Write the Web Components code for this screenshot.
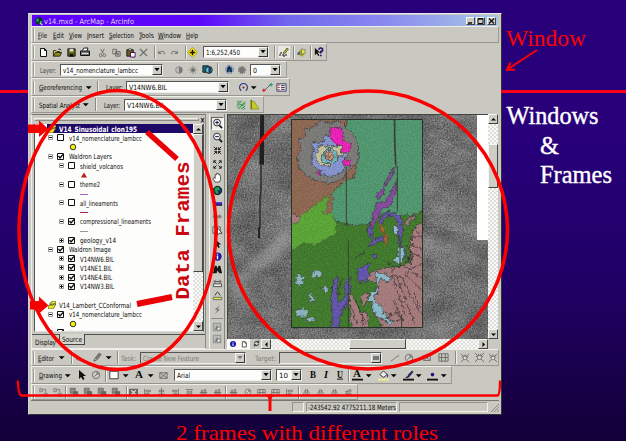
<!DOCTYPE html>
<html lang="en"><head><meta charset="utf-8"><title>Windows &amp; Frames</title>
<style>html,body{margin:0;width:626px;height:441px;overflow:hidden;background:#27007a}</style></head>
<body><slide-page></slide-page>
<script>
const define=(name,render)=>customElements.define(name,class extends HTMLElement{
  constructor(){super();this.attachShadow({mode:'open'});}
  connectedCallback(){this.shadowRoot.innerHTML=render(this);}
});
const esc=s=>s.replace(/&/g,'&amp;');
const T=(s,w,o='')=>`<fit-text w="${w}" text="${esc(s)}" ${o}></fit-text>`;

/* Text set to an exact measure */
define('fit-text',e=>{
  const w=+e.getAttribute('w'),s=+(e.getAttribute('size')||7.2),h=+(e.getAttribute('h')||10),u=e.getAttribute('u');
  const t=esc(e.getAttribute('text'));
  const label=u===null?t:t.slice(0,+u)+'<tspan text-decoration="underline">'+t[+u]+'</tspan>'+t.slice(+u+1);
  return `<style>:host{display:block;flex:none;width:${w}px;height:${h}px}svg{display:block;overflow:visible}text{font-family:${e.getAttribute('font')||'"DejaVu Sans Condensed","DejaVu Sans","Liberation Sans",sans-serif'};font-size:${s}px;font-weight:${e.getAttribute('weight')||400};font-style:${e.hasAttribute('it')?'italic':'normal'};fill:${e.getAttribute('color')||'#080808'}}</style>
  <svg width="${w}" height="${h}"><text x="0" y="${e.getAttribute('base')||h/2+2.6}" textLength="${w}" lengthAdjust="spacingAndGlyphs">${label}</text></svg>`;});

/* 12x12 glyphs */
const K='stroke="#111" fill="none"', G='stroke="#686863" fill="none"';
const icons={
 globe:'<circle cx="6" cy="6" r="4.6" fill="#0b3a2a"/><path d="M3 3l3 1-1 3-2 0zM7 6l3 0-2 4z" fill="#20b060"/><path d="M7 8l3 3" stroke="#ddd" stroke-width="1.5"/>',
 page:`<path d="M3.5 2.5h4l2 2v6h-6z M7.5 2.5v2h2" stroke="#111" fill="#fff"/>`,
 open:'<path d="M1.5 10V4h3l1 1h3v2" stroke="#221" fill="#e8e060"/><path d="M1.5 10l2-4h7l-2 4z" fill="#8a8a20" stroke="#221"/><path d="M7 2.5q2-1 3 1" stroke="#111" fill="none"/>',
 save:'<path d="M2 2h8v8H2z" fill="#66661c" stroke="#111"/><path d="M4 2h4v3H4z" fill="#ddd"/><path d="M4 7.500h4v3H4z" fill="#111"/>',
 print:'<path d="M3 5l2-3h4l-1 3" fill="#fff" stroke="#222"/><path d="M1.500 5h9v4.500h-9z" fill="#777" stroke="#111"/><path d="M3 7.500h6" stroke="#ddd"/>',
 cut:`<path d="M4 2l3 5M8 2L5 7" ${G}/><circle cx="4" cy="9" r="1.500" ${G}/><circle cx="8" cy="9" r="1.500" ${G}/>`,
 copy:`<path d="M2 2.500h4v5H2zM5 5h5v5H5z" ${G}/><path d="M6 7h3M6 8.500h3" ${G}/>`,
 paste:'<path d="M2 3h7v7H2z" fill="#665f18" stroke="#111"/><path d="M4 2h3v2H4z" fill="#ddd" stroke="#111" stroke-width=".6"/><path d="M6 6h5v5H6z" fill="#fff" stroke="#406"/>',
 del:`<path d="M2 2l8 8M10 2L2 10" ${G} stroke-width="1.300"/>`,
 undo:`<path d="M3 4v3h3M3 7q3-4 6-1v2" ${G}/>`, redo:`<path d="M9 4v3H6M9 7Q6 3 3 6v2" ${G}/>`,
 add:'<path d="M6 .5L11.500 6 6 11.500 .5 6z" fill="#ffe600" stroke="#887a10" stroke-width=".6"/><path d="M6 3v6M3 6h6" stroke="#111" stroke-width="1.600"/>',
 edit:'<path d="M0 0h12v12H0z" fill="#e9e8e0"/><path d="M1 9h9M2 7h2M5 10h2" stroke="#111" stroke-dasharray="2 1"/><path d="M5 7l4-5 1.500 1-4 5z" fill="#bbbf20" stroke="#222" stroke-width=".6"/>',
 box:'<path d="M1 7l4-4 5 3-3 5z" fill="#a5a820"/><path d="M6 2l4 1v4L6 8z" fill="#dddf50" stroke="#555" stroke-width=".6"/><path d="M1 8l3-4v5z" fill="#46589c"/>',
 help:'<path d="M2 1v8l2-2 2 3 1-1-2-3h3z" fill="#111"/><path d="M6.500 3q0-2 2-2t2 2-2 2v2M8.500 8.500v1.500" stroke="#20106c" stroke-width="1.700" fill="none"/>',
 half:'<circle cx="6" cy="6" r="4" fill="#bbb" stroke="#858580"/><path d="M6 2a4 4 0 0 1 0 8z" fill="#777"/>',
 sun:`<circle cx="6" cy="6" r="2" fill="#777"/><path d="M6 1v10M1 6h10M2.500 2.500l7 7M9.500 2.500l-7 7" ${G} stroke-width=".8"/>`,
 trans:'<path d="M1 2h6v7H1z" fill="#176d87" stroke="#111"/><circle cx="7.500" cy="6.500" r="3.700" fill="#60c8d0" stroke="#111"/><path d="M7 3h3v7H7z" fill="#203f60"/>',
 swipe:'<circle cx="6" cy="6" r="4.500" fill="none" stroke="#426ab0" stroke-dasharray="1 1"/><circle cx="6" cy="6" r="3.300" fill="#1c7050"/><path d="M3.500 9l2-6 3 6" stroke="#24107a" fill="none" stroke-width="1.500"/>',
 dots:'<circle cx="6" cy="6" r="3.500" fill="#777" stroke="#777" stroke-width="3" stroke-dasharray="1.200 1"/>',
 rotate:'<path d="M3.500 9.500a4.300 4.300 0 1 1 5 0" fill="none" stroke="#30308a" stroke-width="1.200"/><circle cx="6" cy="6" r="1" fill="#611"/>',
 link:'<path d="M2 10L10 2" stroke="#40569a"/><path d="M0 9h4M2 7v4" stroke="#e01818" stroke-width="1.200"/><path d="M8 3h4M10 1v4" stroke="#169858"/>',
 table:'<path d="M1 2h10v8H1z" fill="#eee" stroke="#30306a"/><path d="M2 3.500h2M2 6h2M2 8.500h2" stroke="#c11"/><path d="M5.500 4h4M5.500 6h4M5.500 8h4" stroke="#333"/>',
 contour:'<path d="M1 1h10v10H1z" fill="#b4ccb0"/><path d="M1 3l3-2M1 6l6-5M1 9l4-4 2 1 4-4M3 11l4-5 1 1 3-3M6 11l5-4M9 11l2-1" stroke="#187534" fill="none"/>',
 hist:'<path d="M2 11V1l2 2 1-1 6 9z" fill="#c5cb20" stroke="#6d7618" stroke-width=".6"/><path d="M2.500 1v10" stroke="#5b650c"/>',
 zin:`<circle cx="5.500" cy="5" r="3.700" stroke="#222" fill="#eef"/><path d="M8 8l3 3" ${K} stroke-width="1.700"/><path d="M3.500 5h4M5.500 3v4" ${K}/>`,
 zout:`<circle cx="5.500" cy="5" r="3.700" stroke="#222" fill="#eef"/><path d="M8 8l3 3" ${K} stroke-width="1.700"/><path d="M3.500 5h4" ${K}/>`,
 fixin:`<path d="M2 2l3 3H2.500M5 5V2.500M10 2L7 5h2.500M7 5V2.500M2 10l3-3H2.500M5 7v2.500M10 10L7 7h2.500M7 7v2.500" ${K}/>`,
 fixout:`<path d="M5 5L2 2h2.500M2 2v2.500M7 5l3-3H7.500M10 2v2.500M5 7l-3 3h2.500M2 10V7.500M7 7l3 3H7.500M10 10V7.500" ${K}/>`,
 hand:'<path d="M3.500 11L1 7l1-1 1.500 1V3h1.300V1.500h1.400V2h1.300v1h1.400l.6 5-1.500 3z" fill="#fff" stroke="#222" stroke-width=".8"/>',
 earth:'<circle cx="6" cy="6" r="4.600" fill="#13366f" stroke="#111"/><path d="M3 3l4-1 2 3-3 1 1 3-2 1-2-4z" fill="#18a048"/>',
 back:'<path d="M1 6l3-3v1.500h7v3H4v1.500z" fill="#3722c0"/><path d="M4 8h7" stroke="#111"/>',
 fwd:'<path d="M11 6L8 3v1.500H1v3h7v1.500z" fill="#858580"/>',
 select:'<path d="M1 2h8v7H1z" fill="#ddd" stroke="#555"/><path d="M6 3v8l2-2h3z" fill="#fff" stroke="#111" stroke-width=".8"/>',
 arrow:'<path d="M3 1v9l2-2 2 3 1.500-1L7 7h3z" fill="#111"/>',
 arrowg:'<path d="M3 1v9l2-2 2 3 1.500-1L7 7h3z" fill="#85857f"/>',
 info:'<circle cx="6" cy="6" r="4.500" fill="#1b18a0"/><path d="M6 3v1M6 5v4" stroke="#fff" stroke-width="1.500"/>',
 find:'<path d="M1 10L3 2h2l1 3 1-3h2l2 8H8L6 7l-1 3z" fill="#151515"/>',
 measure:'<path d="M1.500 7.500h9v3h-9z" fill="#eee" stroke="#444"/><path d="M3 5h6M4 3L2 5l2 2M8 3l2 2-2 2" stroke="#444" fill="none"/>',
 hyper:'<path d="M1.500 8h9v2.500h-9z" fill="#eff050" stroke="#665"/><path d="M3 6l3-4 3 4" stroke="#333" fill="none"/>',
 bolt:'<path d="M9 1L3 6l3 .5L3 11l6-5-3-.5z" fill="#777"/>',
 bitmap:'<path d="M1.500 1.500h9v9h-9z" fill="#bbb" stroke="#858580"/><path d="M3 9l3-5 4 5z" fill="#777"/><circle cx="8" cy="8" r="2" fill="#eee" stroke="#777"/>',
 pencil:'<path d="M2 10l1-3 5-6 2 2-5 6z" fill="#777" stroke="#666"/><path d="M3 7l2 2" stroke="#ddd"/>',
 rot:`<circle cx="6" cy="6" r="4.500" ${G}/><path d="M4 8l4-4M6 3.500h2.500V6" ${G}/>`,
 white:'<path d="M1 1.500h10v9H1z" fill="#fff" stroke="#222"/>',
 tag:`<path d="M2 3h8v6H2zM2 3l8 6M10 3L2 9" ${G}/>`,
 nodes:'<path d="M1 1h4v4H1zM7 7h4v4H7z" fill="#b8b8b2" stroke="#777"/><path d="M5 9H2M9 6V2H6" stroke="#666" fill="none"/>',
 group:'<path d="M1.500 1.500h6v6h-6z" fill="#888" stroke="#666"/><path d="M5 5h6v6H5z" fill="#666"/>',
 grid2:'<path d="M0 1h12v10H0z" fill="#666"/><path d="M3 3l6 6M9 3L3 9" stroke="#ddd" stroke-width="1.500"/>',
 al:`<path d="M2 1v10M4 3h6v2H4zM4 7h4v2H4z" ${G}/>`, ac:`<path d="M6 0v12M3 3h6v2H3zM2 8h8v2H2z" ${G}/>`, ar:`<path d="M10 1v10M2 3h6v2H2zM4 7h4v2H4z" ${G}/>`,
 at:`<path d="M1 2h10M3 4h2v6H3zM7 4h2v4H7z" ${G}/>`, dist:`<path d="M1 6h10M3 3h2v6H3zM7 2h2v8H7z" ${G}/>`,
 tri:`<path d="M5 2L1 10h4zM7 2l4 8H7z" ${G}/>`, flip:`<path d="M2 5l7-3v3zM2 7l7 3V7z" ${G}/>`,
 sel:`<path d="M1 1l4 4M11 1L7 5M1 11l4-4M11 11L7 7M5 2v3H2M7 2v3h3" ${G}/><path d="M4 4h4v4H4z" fill="#ddd" stroke="#777"/>`,
 line:`<path d="M1 10l4-3 2-2 4-2" ${G}/>`, frame:`<path d="M1 2h10v8H1zM4 2v8M8 2v8M1 6h10" ${G}/>`,
 fontA:'<path d="M0 10.500h12" stroke="#111" stroke-width="2"/>',
 fill:'<path d="M2 5l4-4 4 4-4 3z" fill="#eee" stroke="#333"/><path d="M9 4q3 1 1 4" fill="none" stroke="#24108a"/><path d="M0 10.500h12" stroke="#f3f090" stroke-width="2"/>',
 pen:'<path d="M3 8q3 0 3-3l4-4 1 1-4 5q-2 2-4 1" fill="#25259a" stroke="#111" stroke-width=".7"/><path d="M0 10.500h12" stroke="#111" stroke-width="2"/>',
 dot:'<circle cx="6" cy="5" r="2" fill="#25108a"/><path d="M0 10.500h12" stroke="#111" stroke-width="2"/>',
 refresh:`<path d="M3 6q0-3 4-3l2 1M9 6q0 3-4 3L3 8M9 2v2.500H6.500M3 10V7.500h2.500" ${K}/>`,
 down:'<path d="M3 4.500h6.500L6.200 8z" fill="#000"/>'
};
define('ui-icon',e=>{const w=e.getAttribute('w')||11;return `<style>:host{display:block;flex:none;width:${w}px;height:${w}px}svg{display:block}</style><svg width="${w}" height="${w}" viewBox="0 0 12 12">${icons[e.getAttribute('name')]}</svg>`});

define('combo-box',e=>{const tw=e.getAttribute('tw'),dis=e.hasAttribute('dis');
 return `<style>:host{display:flex;height:12px;box-sizing:border-box;border:1px solid;border-color:#555 #eee #eee #555;background:${dis?'#c9c8c0':'#fdfdfb'};justify-content:space-between;align-items:center;padding-left:2px;flex:none}
 .b{width:8px;height:8px;background:#cfcec6;border:1px solid;border-color:#f4f4f0 #333 #333 #f4f4f0;display:grid;place-items:center}svg{display:block}</style>
 ${+tw?T(e.getAttribute('text'),tw,dis?'color="#7c7c76"':''):'<span></span>'}<div class="b"><svg width="6" height="4"><path d="${dis&&!+tw?'M0 0h6v4H0z':'M0.500 0h5L3 3.200z'}" fill="${dis?'#777':'#000'}"/></svg></div>`});

/* Toolbar band: items given as [x, width, markup], spaced out by margins */
const row=(left,items)=>{let c=left;return items.map(([x,w,h])=>{const m=x-c;c=x+w;return `<div style="margin-left:${m}px;width:${w}px;flex:none;display:flex;justify-content:center">${h}</div>`}).join('')};
const I=(n,cx,w=11)=>[cx-w/2,w,`<ui-icon name="${n}" w="${w}"></ui-icon>`];
const D=cx=>I('down',cx,11);
const S=x=>[x,2,'<i style="width:1px;height:13px;background:#8a8983;border-right:1px solid #f0f0ea"></i>'];
const L=(s,x,w,o='')=>[x,w,T(s,w,o)];
const C=(s,x,w,tw,dis='')=>[x,w,`<combo-box style="width:${w}px" text="${s}" tw="${tw}" ${dis}></combo-box>`];
const B=(s,cx,w,st)=>[cx-w/2,w,T(s,w,`font="'Liberation Serif',serif" size="9.500" weight="700" ${st||''}`)];
const bands={
 menu:{w:468,h:17,items:[L('File',37,9,'u="0"'),L('Edit',51.500,11,'u="0"'),L('View',67.500,13,'u="0"'),L('Insert',85.500,17,'u="0"'),L('Selection',107.500,25,'u="0"'),L('Tools',138,15,'u="0"'),L('Window',157,23,'u="0"'),L('Help',184.500,12,'u="0"')]},
 std:{w:296,h:18,items:[I('page',42,12),I('open',56),I('save',70),I('print',84,12),I('cut',101),I('copy',115),I('paste',129.500),I('del',142.500),S(153),I('undo',160),I('redo',173.500),S(184),I('add',191.500),C('1:6,252,450',202,66,34),S(273),I('edit',282.500,12),S(292),I('box',300),S(309),I('help',317)]},
 fx:{w:256,h:17,items:[L('Layer:',39,16,'color="#444"'),C('v14_nomenclature_lambcc',58.500,103,75),I('half',178,10),I('sun',192,10),I('trans',206),S(216),I('swipe',228),I('dots',240.500,10),C('0',248.500,31,4)]},
 geo:{w:259,h:18,items:[L('Georeferencing',37.500,43,'u="0"'),D(87),S(96),L('Layer:',104.500,17),C('V14NW6.BIL',125,103,38),I('rotate',242,11),D(252.500),I('link',266,11),I('table',280,11)]},
 spat:{w:233,h:17,items:[L('Spatial Analyst',37.500,41),D(84),S(94),L('Layer:',103,16),C('V14NW6.BIL',123,103,38),I('contour',239.500,10),I('hist',253)]},
 editor:{w:468,h:17,items:[L('Editor',37,16,'u="0"'),D(60),S(70),I('arrowg',77,8),I('pencil',96),D(107),S(116),L('Task:',120,15,'color="#7c7c76"'),C('Create New Feature',138.500,106,56,'dis'),L('Target:',253.500,21,'color="#7c7c76"'),C('',278,103,0,'dis'),I('line',394,10),I('rot',408,10),I('tag',426,10),I('frame',442,11),S(454),I('sel',464,10),I('sel',478,11),I('sel',492,10)]},
 draw:{w:421,h:18,items:[L('Drawing',37.500,23,'u="0"'),D(66),I('arrow',81,12),I('rot',95,10),S(104),I('white',113,10),D(124),B('A',137.500,8,'size="11"'),D(149),I('tag',162,11),C('Arial',173,98,13),C('10',275,26,9),B('B',312,6),B('I',325,4,'it'),B('U',338.500,6,'u="0"'),S(347),[350,12,'<div style="display:grid;place-items:center"><div style="grid-area:1/1">'+T('A',8,'font="\'Liberation Serif\',serif" size="10.500" weight="700" base="7"')+'</div><ui-icon style="grid-area:1/1" name="fontA" w="11"></ui-icon></div>'],D(367.500),I('fill',382),D(392.500),I('pen',407),D(417.500),I('dot',431),D(442.500)]},
 gfx:{w:327,h:16,items:[I('nodes',42,9),I('nodes',56,9),S(64),I('group',73,10),I('group',87,10),I('group',101,10),I('group',115,10),S(125),I('grid2',132,9),I('al',146,9),I('ac',160,9),I('ar',174,9),I('at',188,9),I('dist',202,9),I('dist',216,9),S(224),I('dist',232.500,9),I('rot',247,8),I('frame',260,9),I('frame',274,9),I('al',288,9),S(297),I('tri',305.500,9),I('tri',319,9),I('tri',333,9),I('flip',347,9)]}
};
define('tool-band',e=>{const b=bands[e.getAttribute('kind')];return `<style>:host{display:flex;flex:none;align-items:center;box-sizing:border-box;height:${b.h}px;width:${b.w}px;border:1px solid;border-color:#efeee8 #9b9a94 #96958f #efeee8;padding-left:1px}
 .grip{width:1px;height:13px;background:#9a9993;border-right:1px solid #f4f4ee;flex:none}</style><i class="grip"></i>${row(34,b.items)}`});

define('title-bar',()=>`<style>:host{display:flex;height:11px;flex:none;align-items:center;margin:0 1px;background:linear-gradient(90deg,#6000ff 0,#5d06fa 36%,#7067ee 55%,#8a8af0 76%,#a8c8e6);padding:0 2px;box-sizing:border-box}
 .s{flex:1}.b{width:7px;height:6px;border:1px solid;border-color:#f5f5f0 #444 #444 #f5f5f0;background:#cdccc4;margin-left:1px}.b:last-child{margin-left:2px}svg{display:block}</style>
 <ui-icon name="globe" w="10"></ui-icon><div>${T('v14.mxd - ArcMap - ArcInfo',90,'color="#dcd2ff" size="7.400"')}</div><div class="s"></div>
 <div class="b"><svg width="7" height="6"><path d="M1 5h4" stroke="#111" stroke-width="1.500"/></svg></div><div class="b"><svg width="7" height="6"><path d="M1 .5h5v5H1zM1 1.200h5" stroke="#111" fill="none"/></svg></div><div class="b"><svg width="7" height="6"><path d="M1 .5l5 5M6 .5l-5 5" stroke="#111" stroke-width="1.300"/></svg></div>`);

/* Table of contents */
define('tree-row',e=>{const a=n=>e.getAttribute(n),lv=+a('lv');
 const pad=lv===1?13:24;let c='';
 const exp=`<svg width="5" height="5"><path d="M.5.5h4v4h-4z" fill="#fff" stroke="#999"/><path d="M1 2.500h3${a('exp')==='+'?'M2.500 1v3':''}" stroke="#111"/></svg>`;
 if(a('sym')){const s={c:'<circle cx="4" cy="4" r="2.800" fill="#f0f000" stroke="#333"/>',t:'<path d="M4 1.500l3 5H1z" fill="#c01818"/>',p:'<path d="M0 4.500h8" stroke="#aa66cc"/>',r:'<path d="M0 4.500h8" stroke="#a52a3a"/>',g:'<path d="M0 4.500h8" stroke="#999"/>'}[a('sym')];
  c=`<svg style="margin-left:${lv===1?33.500:44.500}px" width="8" height="8">${s}</svg>`}
 else if(lv===0)c=a('text')?`<svg style="margin:0 3px 0 12.500px" width="8" height="8"><path d="M0 5l4-2h4L5 8H0zM2 2l3-2h3v2L5 4H2z" fill="#e8e820" stroke="#443" stroke-width=".7"/></svg>${T(a('text'),a('w'),e.hasAttribute('hot')?'color="#fff" weight="700" size="7.400"':'')}`:'';
 else c=`<div style="width:${pad}px"></div>${exp}<svg style="margin:0 5px 0 4px" width="7" height="7"><path d="M.5.5h6v6h-6z" fill="#fff" stroke="#111"/>${e.hasAttribute('on')?'<path d="M1.500 3l1.500 2 3-3.500" stroke="#111" fill="none" stroke-width="1.300"/>':''}</svg>${T(a('text'),a('w'))}`;
 return `<style>:host{display:flex;align-items:center;height:9.290px;flex:none;${e.hasAttribute('hot')?'background:linear-gradient(90deg,#fdfdfb 12px,#1d0a68 12px)':''}}div,svg{flex:none;display:block}</style>${c}`});
define('scroll-bar',e=>{const v=e.hasAttribute('v'),a=n=>e.getAttribute(n);const r=v?['M2 5.500h5L4.500 3z','M2 3.500h5L4.500 6z']:['M5.500 2v5L3 4.500z','M3.500 2v5L6 4.500z'];
 return `<style>:host{display:flex;flex:none;flex-direction:${v?'column':'row'};background:repeating-conic-gradient(#fafaf8 0 25%,#dedfda 0 50%) 0 0/4px 4px}
 .b,.t{box-sizing:border-box;background:#cfcec6;border:1px solid;border-color:#f6f6f2 #444 #444 #f6f6f2;flex:none}.b{width:10px;height:10px}.g{flex:1}svg{display:block;margin:-.5px}</style>
 <div class="b"><svg width="9" height="9"><path d="${r[0]}"/></svg></div><div style="${v?'height':'width'}:${a('pre')}px"></div><div class="t" style="${v?'height':'width'}:${a('thumb')}px;${v?'width':'height'}:10px"></div><div class="g"></div><div class="b"><svg width="9" height="9"><path d="${r[1]}"/></svg></div>`});
const rows=[[0,'V14_Sinusoidal_clon195',78,'hot'],[1,'v14_nomenclature_lambcc',73],[1,'','','sym="c"'],[1,'Waldron Layers',43,'on'],[2,'shield_volcanos',43],[2,'','','sym="t"'],[2,'theme2',20],[2,'','','sym="p"'],[2,'all_lineaments',38],[2,'','','sym="r"'],[2,'compressional_lineaments',71,'on'],[2,'','','sym="g"'],[2,'geology_v14',36,'on exp="+"'],[1,'Waldron Image',42,'on'],[2,'V14NW6.BIL',34,'on exp="+"'],[2,'V14NE1.BIL',32,'on exp="+"'],[2,'V14NE4.BIL',32,'on exp="+"'],[2,'V14NW3.BIL',34,'on exp="+"'],[0,'',''],[0,'V14_Lambert_CConformal',72],[1,'v14_nomenclature_lambcc',73,'on'],[1,'','','sym="c"'],[1,'Waldron Layers',43,'on']];
define('toc-panel',()=>`<style>:host{display:flex;flex-direction:column;width:175px;box-sizing:border-box;border:1px solid;border-color:#77766f #8b8a84 #eee #eee;flex:none}
 .x{height:9px;display:flex;align-items:center;gap:1px}.x i{flex:1;height:1px;border:1px solid;border-color:#f3f3ed #8b8a84 #8b8a84 #f3f3ed;margin-left:2px}
 .box{display:flex;height:208px;margin:0 1px 0 2px;border-left:1px solid #555;border-right:1px solid #555;border-bottom:1px solid #ddd;background:#fdfdfb;box-sizing:border-box}
 .list{flex:1;overflow:hidden}.tabs{display:flex;align-items:flex-start;margin-top:2px;border-top:1px solid #555;height:14px}.tab{padding:2px 3px 0;height:10px}.on{border:1px solid #444;border-top:0;background:#d6d5cd;padding:0 2px;margin-top:-1px}</style>
 <div class="x"><i></i>${T('×',5,'size="9" weight="700"')}</div><div class="box"><div class="list">${rows.map(r=>`<tree-row lv="${r[0]}" text="${r[1]}" w="${r[2]}" ${r[3]||''}></tree-row>`).join('')}</div><scroll-bar v pre="0" thumb="138"></scroll-bar></div>
 <div class="tabs"><div class="tab">${T('Display',21)}</div><div class="tab on">${T('Source',20)}</div></div>`);
define('tool-column',()=>`<style>:host{display:flex;flex-direction:column;width:16px;align-items:center;gap:2.200px;padding-top:3px;box-sizing:border-box;border-left:1px solid #f4f4ee;border-right:1px solid #85847e;flex:none}.k{background:#efeee9;border:1px solid;border-color:#666 #fff #fff #666}hr{width:12px;border:0;border-top:1px solid #888;margin:1px}</style>
 <ui-icon class="k" name="zin"></ui-icon>${['zout','fixin','fixout','hand','earth','back','fwd','select','arrow','info','find','measure','hyper','bolt'].map(n=>`<ui-icon name="${n}" w="11"></ui-icon>`).join('')}<hr><ui-icon name="bitmap" w="10"></ui-icon><ui-icon name="bitmap" w="10"></ui-icon>`);

/* Map canvas: drawn in thirds of a pixel; filters roughen the unit outlines */
const FR=[[270,485,22,15],[220,505,18,20],[296,530,15,11],[255,560,13,18],[228,604,26,16],[248,625,18,9]];
const rnd=(i,s)=>{const v=Math.sin(i*12.9898+s*78.233)*43758.5453;return v-Math.floor(v)};
const shards=FR.map(([cx,cy,rx,ry],s)=>{let p=[];for(let i=0;i<16;i++){const a=i/16*6.283,r=.35+.75*rnd(i,s+1);p.push((cx+rx*r*Math.cos(a)).toFixed(0)+' '+(cy+ry*r*Math.sin(a)).toFixed(0))}return 'M'+p.join('L')+'z'}).join('');
define('map-view',()=>`<style>:host{display:flex;flex-direction:column;width:272px;flex:none}.top{display:flex;height:225px}.bot{display:flex;height:10px;width:261px}.v{width:23px;display:flex;align-items:center;justify-content:space-around;background:#fafaf6;margin-right:2px}svg{display:block}scroll-bar{flex:1}.top scroll-bar{flex:none;width:10px}.top svg{flex:none}filter{color-interpolation-filters:sRGB}</style>
 <div class="top"><svg width="261" height="225" viewBox="227 114 261 225">
 <defs><filter id="n" x="0" y="0" width="1" height="1"><feTurbulence type="fractalNoise" baseFrequency=".7" numOctaves="2" seed="4"/><feColorMatrix values="1 .3 0 0 -.2 1 .3 0 0 -.2 1 .3 0 0 -.2 0 0 0 0 1"/></filter>
 <filter id="m" x="0" y="0" width="1" height="1"><feTurbulence type="fractalNoise" baseFrequency=".03 .05" numOctaves="4" seed="23"/><feColorMatrix values="1.200 .4 0 0 -.35 1.200 .4 0 0 -.35 1.200 .4 0 0 -.35 0 0 0 0 1"/></filter>
 <filter id="d" filterUnits="userSpaceOnUse" x="150" y="0" width="636" height="690"><feTurbulence type="fractalNoise" baseFrequency=".09" numOctaves="2" seed="8" result="t"/><feDisplacementMap in="SourceGraphic" in2="t" scale="17" xChannelSelector="R" yChannelSelector="G"/></filter>
 <filter id="b" x="-.3" y="-.3" width="1.600" height="1.600"><feGaussianBlur stdDeviation="9"/></filter>
 <clipPath id="c"><path d="M193 23H587V646H193z"/></clipPath></defs>
 <path d="M227 114h261v225H227z" fill="#6c6c6c"/><rect x="227" y="114" width="261" height="225" filter="url(#m)" opacity=".3"/><rect x="227" y="114" width="261" height="225" filter="url(#n)" opacity=".38"/>
 <g transform="translate(227 112) scale(.33333)">
 <path d="M10 500l80-70 100-90v70l-110 80-60 70z" fill="#ccc" opacity=".28" filter="url(#b)"/><path d="M590 370q100 20 160 60v30q-80-50-160-50z" fill="#ccc" opacity=".2" filter="url(#b)"/>
 <g fill="none" stroke="#ddd" stroke-width="1.500" opacity=".33" filter="url(#d)"><path d="M590 130q60-70 150-60M592 160q60-80 130-70M594 200q30-70 130-80M596 240q20-80 110-100M598 280q20-90 120-110M596 310q70-20 130-120M594 330q90-30 140-90M600 60l130 70M620 30l110 60M600 100l120 80M598 220q60 20 120 80M600 345q80-40 140-20M600 355q100-10 140 15M610 400l80 30"/></g>
 <path d="M750 0h36v384h-36z" fill="#fff"/>
 <path d="M100 0h11v158h-14z" fill="#202020"/><path d="M102 158v80l-3 20v90" stroke="#2b2b2b" stroke-width="4.500" fill="none"/><path d="M96 346v33" stroke="#222" stroke-width="6"/>
 <g clip-path="url(#c)">
 <path d="M190 20h400v630H190z" fill="#4c9d6f"/>
 <g filter="url(#d)" stroke="#363636" stroke-width="2.200" stroke-linejoin="round">
 <path d="M325 325l20 8 35 7 45-3 20-20 40-20 30 15 40-2 35-15 30-30v400H170V330z" fill="#397c22"/>
 <path d="M170 0h190l-4 40-2 60 38 55-14 44-26 8-25 22-14 20-12 15v35l-15 2-15-8 12-6-10 20-70 40-63 0z" fill="#94664d"/>
 <path d="M180 298l22 8 20 14-12 16H180z" fill="#ad7b7c"/>
 <path d="M180 338l30-4 12-22 22-18 42-32 18-12 3 22-6 22 15 12 12 26 0 34-22 10-40 24-40-8-30 22H180z" fill="#57ad2c" stroke-width="1"/>
 <path d="M304 252l14-4-2 46-12 12-18-4 12-10z" fill="#94664d" stroke-width="1"/>
 <path d="M285 28l24 6 26-8 18 18 14 12 22 26 8 40-6 28-24 22-16 26-24 12-28 4-24-10-22-2-20-14-18-26-4-26 12-30-10-22 22-12 0-20 28-10 16-18z" fill="#7d7c79"/>
 <path d="M292 66l16 6 24 20 18 22 12 16-10 24-4 24-22 12-24 4-20-6-6-14-20-14-2-30 6-18-8-16 14-6 10 4 14-4z" fill="#8999dd"/>
 <path d="M308 50l20-4 18 4 8 36 18 10 0 14-10 12-20 0-2-18-18-12-14-14 4-10zM350 134l20 14 0 14-22-3zM268 180l16-6-5 14z" fill="#ff14c4"/>
 <path d="M274 102l20-2 24 4 26-4 0 32-18 14-20 18-28-6-12-22z" fill="#d0cf9d"/>
 <path d="M284 130l12-18 20-4 14 14 2 22-18 12-20-2-12-10z" fill="#6fc3ce"/><path d="M294 122l16-6 12 14-8 16-18-2z" fill="#d59a78"/><path d="M288 132h36M306 112v38" fill="none"/>
 <path d="M506 158l-20 30-16 40-24 22 4 16 20-18 4-20 24-40zM508 200l-10 30-24 40-26 4-20 70-10 14 14 2 32-66 28-16 18-48z" fill="#8944a8"/>
 <path d="M458 340q-4-40 36-40 34 4 32 44l-2 60 16 18-4 14-20-24-2-66q0-34-24-36-22 2-24 32z" fill="#5f50b4"/>
 <path d="M420 350l20-10-6 30 16 14 14-14 12 16-18 2-14 10-18 6 8-20-10-16zM438 424l12 4-2 12-12-4zM394 470l34-18-6 30 10 4-14 28-14-8-4 10-8-16z" fill="#5f50b4"/>
 <path d="M456 334l14 12 0 14 12 16-4 22-8-4 2-26-14-18z" fill="#b45f25" stroke="#6a4a20"/>
 <path d="M532 336l12-18 24-8-2 12-16 2-8 20zM600 330l-30 6-12 20-10 50 6 40-24 16-40 4-50 10-20 26 28 10 6 32-28 6 6 30 10 30 20 26v50h150z" fill="#ae7c7e"/>
 <path d="M400 556l14-16 10 6-2 18-16 24zM366 550l10-4 14 30 8 24 16-2 12 22-4 40h-48z" fill="#ae7c7e"/>
 <path d="M312 660l4-50-4-40 6-60 16-18-4 40 4 46 20-26-2-38 20-20-6 60-4 24-14 20-8 18-4 44z" fill="#5f50b4"/>
 <path d="M444 478l20 4 30 16-14 12-20-10-10 24 2 20-12 10 4 14 18 14 8 20 16 22 12 8-10 8-18-16-22-8-10-24-4-24-12-4 8-22 14-4 6-24zM498 340l18 8-4 24-12-8zM516 404l16 0-2 40-16 10-20-6 18-14z" fill="#8ec6d7"/>
 <path d="${shards}" fill="#8fbecb" stroke-width="1.500"/>
 </g>
 <g fill="none" stroke="#2b2224" stroke-width="2.200"><g filter="url(#d)"><path d="M494 480q6-18 26-18 24 0 24 16-2 18-24 18-20 0-26-16zM500 464l-20-14M538 462l14-34M544 474l42-20M540 490l45 46M524 496l30 60 30 50M510 496l30 80 22 60M494 488l20 60 20 60M556 480l30 20M552 356l34 6M554 376l30-2M552 400l34 10M550 420l34 18M538 400l20 30-6 30M544 430l10 26M550 430l-14 24M500 560l16 40M560 540l20 50M385 560l20 50 4 36M398 600l20 30M376 590l14 50M466 620l50-20M500 590l30 40M470 600l24 8M480 630l50-8M344 500l-10 50M380 440l34-20M320 510l-8 30M340 600l20-30"/></g>
 <path d="M358 165v175M364 385v300M511 162v136M519 375v90M524 606v40" stroke="#2c3a2c" stroke-width="3"/><path d="M503 23v60l3 75" stroke="#333" stroke-width="5"/></g>
 </g></g>
 <rect x="291.500" y="119.500" width="131" height="208" filter="url(#n)" opacity=".15"/><path d="M291.500 119.500H422.500V327.500H291.500z" fill="none" stroke="#293029"/><path d="M227 114.500h261M227.500 114v225" stroke="#444" fill="none"/>
 </svg><scroll-bar v pre="20" thumb="44"></scroll-bar></div>
 <div class="bot"><div class="v"><ui-icon name="info" w="8"></ui-icon><ui-icon name="page" w="8"></ui-icon></div><ui-icon name="refresh" w="9"></ui-icon><scroll-bar pre="78" thumb="57"></scroll-bar></div>`);

define('status-bar',()=>`<style>:host{display:flex;height:12px;align-items:center;flex:none;border-top:1px solid #77766f;padding-left:261px;gap:2px}div{height:8px;border:1px solid;border-color:#92918b #f2f2ec #f2f2ec #92918b;display:flex;align-items:center}</style><div style="width:10px"></div><div style="width:90px;padding-left:1px">${T('-243542.92 4775211.18 Meters',88)}</div><div style="width:88px"></div><svg width="9" height="9"><path d="M1 9l8-8M4 9l5-5M7 9l2-2" stroke="#888"/></svg>`);

define('app-window',()=>`<style>:host{display:flex;flex-direction:column;width:474px;height:402px;box-sizing:border-box;padding:1px 2px;background:#cac9c1;border:1px solid;border-color:#e8e7f0 #333 #333 #d5d4cc}.main{display:flex;height:235px;margin-top:1px;flex:none}</style>
 <title-bar></title-bar>${['menu','std','fx','geo','spat'].map(k=>`<tool-band kind="${k}"></tool-band>`).join('')}
 <div class="main"><toc-panel></toc-panel><div style="width:3px"></div><tool-column></tool-column><div style="width:2px"></div><map-view></map-view></div>
 ${['editor','draw','gfx'].map(k=>`<tool-band kind="${k}"></tool-band>`).join('')}<status-bar></status-bar>`);

/* Red call-outs lying over the window */
define('call-outs',()=>`<style>:host{position:absolute;inset:0}svg{display:block}.t{font-family:"Liberation Serif","Times New Roman",serif}</style>
 <svg width="626" height="441"><g fill="none" stroke="#fa0000"><ellipse cx="117.500" cy="230" rx="98.500" ry="139.500" stroke-width="3.500"/><ellipse cx="368" cy="230" rx="139.500" ry="139" stroke-width="3.500"/>
 <path d="M0 91.500h28M501 91.500h125" stroke="#ff0018" stroke-width="3"/><path d="M18 380.500q0 13 3 15H498q2-2 2-15" stroke-width="2.300"/><path d="M270 394v17" stroke-width="3"/><path d="M266 395.500q4 0 4 6 0-6 4-6" stroke-width="2"/>
 <path d="M537 50L508 69M510.500 62.500L507 69.700h8" stroke-width="2"/><path d="M147 132L177 159" stroke-width="5.500" stroke="#ea0006"/><path d="M137 304L172 297" stroke-width="6" stroke="#ea0006"/></g>
 <path d="M28 124.500h11v-4l9.500 8.500-9.500 8v-4H28zM30 301h9v-4.500l9.500 9-9.500 8v-4h-9z" fill="#f50000"/>
 <text transform="translate(189 299.500) rotate(-90)" textLength="138" lengthAdjust="spacingAndGlyphs" fill="#c90812" style="font:700 20px 'Liberation Mono','Courier New',monospace">Data Frames</text>
 <g class="t"><text x="506" y="46" font-size="22.500" fill="#fa0000" textLength="80" lengthAdjust="spacingAndGlyphs">Window</text>
 <g fill="#fff" stroke="#fff" stroke-width=".4" font-size="25.500"><text x="506.500" y="124" textLength="92" lengthAdjust="spacingAndGlyphs">Windows</text><text x="540" y="153.500" textLength="19" lengthAdjust="spacingAndGlyphs">&amp;</text><text x="540" y="183" textLength="72" lengthAdjust="spacingAndGlyphs">Frames</text></g>
 <text x="176" y="439.500" font-size="22" fill="#fa0000" textLength="262" lengthAdjust="spacingAndGlyphs">2 frames with different roles</text></g></svg>`);
define('slide-page',()=>`<style>:host{display:block;position:relative;width:626px;height:441px;box-sizing:border-box;padding:13px 0 0 28px;background:linear-gradient(#27007a 0,#27007a 32%,#200064 65%,#130038);overflow:hidden}</style><app-window></app-window><call-outs></call-outs>`);
</script></body></html>
